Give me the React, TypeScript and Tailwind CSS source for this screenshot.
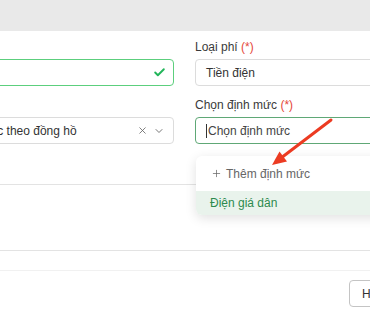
import React from 'react';
import { Check, X, ChevronDown, Plus } from 'lucide-react';

const font = { fontFamily: '"Liberation Sans", Arial, sans-serif' };

function Label({ text, required }: { text: string; required?: boolean }) {
  return (
    <div className="h-4 mb-1 text-xs leading-4 text-[#3a3a3a] whitespace-nowrap">
      {text}
      {required && <span className="text-[#e5483a]"> (*)</span>}
    </div>
  );
}

export default function App() {
  return (
    <div className="relative w-[370px] h-[320px] overflow-hidden bg-white" style={font}>
      {/* modal backdrop strip */}
      <div className="h-[31px] bg-[#e9e9e9]" />

      {/* form */}
      <div className="flex gap-[21px] pt-2 ml-[-60px]">
        <div className="w-[234px] shrink-0">
          <div className="h-4 mb-1" />
          <div className="h-[27px] flex items-center justify-end pr-[7px] border border-[#5ccf7d] rounded-[4px]">
            <Check className="w-[13px] h-[13px] text-[#22b55a]" strokeWidth={3.5} />
          </div>
          <div className="h-[11px]" />
          <div className="h-4 mb-1" />
          <div className="h-[27px] flex items-center pl-[7px] pr-[8px] border border-[#dcdcdc] rounded-[4px] text-xs text-[#333]">
            <span className="flex-1 whitespace-nowrap">Tính cước theo đồng hồ</span>
            <X className="w-[11px] h-[11px] text-[#666] mr-[5px]" strokeWidth={1.8} />
            <ChevronDown className="w-[12px] h-[12px] text-[#777]" strokeWidth={2} />
          </div>
        </div>
        <div className="w-[200px] shrink-0">
          <Label text="Loại phí" required />
          <div className="h-[27px] flex items-center pl-[10px] border border-[#dcdcdc] rounded-[4px] text-xs text-[#333]">
            Tiền điện
          </div>
          <div className="h-[11px]" />
          <Label text="Chọn định mức" required />
          <div className="h-[27px] flex items-center pl-[10px] border border-[#5fa876] rounded-[4px] text-xs text-[#444]">
            <span className="w-px h-[14px] bg-[#333] mr-[1px]" />
            Chọn định mức
          </div>
        </div>
      </div>

      <div className="mt-[40px] border-t border-[#e3e3e3]" />
      <div className="h-[65px]" />
      <div className="border-t border-[#e3e3e3]" />
      <div className="h-[19px]" />
      <div className="border-t border-[#f1f1f1]" />

      <div className="flex justify-end pt-[9px] mr-[-43px]">
        <button className="h-[27px] px-3 border border-[#c4c4c4] rounded-[4px] text-xs text-[#333] bg-white">
          Hủy bỏ
        </button>
      </div>

      {/* dropdown menu */}
      <div className="absolute left-[196px] top-[156px] w-[200px] bg-white rounded-[6px] shadow-[0_3px_12px_rgba(0,0,0,0.12)] overflow-hidden text-xs">
        <div className="h-[35px] flex items-center pl-[15px] gap-[4px] text-[#666]">
          <Plus className="w-[11px] h-[11px]" strokeWidth={1.6} />
          <span>Thêm định mức</span>
        </div>
        <div className="h-[24px] flex items-center pl-[14px] bg-[#e9f3ec] text-[#2d8a4e]">
          Điện giá dân
        </div>
      </div>

      {/* annotation arrow */}
      <svg className="absolute left-0 top-0 pointer-events-none" width="370" height="320">
        <line x1="331" y1="120" x2="283" y2="156.5" stroke="#ec3b22" strokeWidth="3" strokeLinecap="round" />
        <polygon points="272,165 287,161.5 279.5,151.5" fill="#ec3b22" />
      </svg>
    </div>
  );
}
